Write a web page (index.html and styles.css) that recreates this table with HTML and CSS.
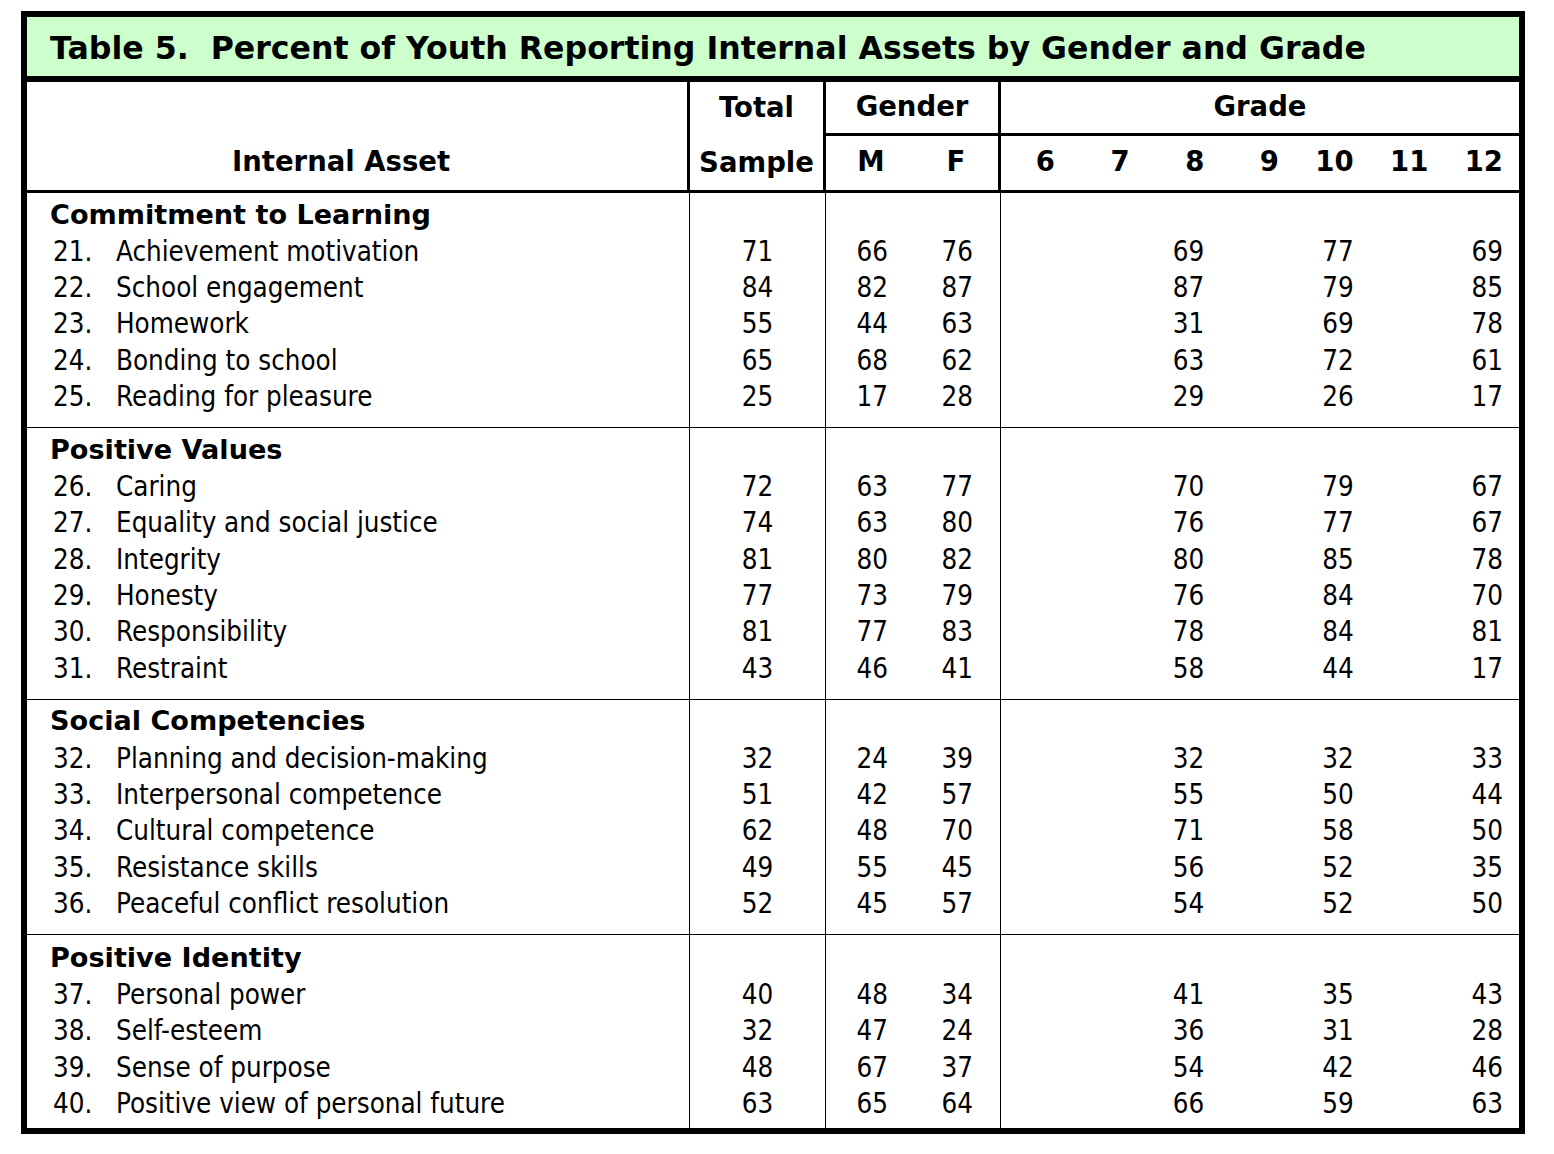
FILE: index.html
```html
<!DOCTYPE html>
<html>
<head>
<meta charset="utf-8">
<link rel="stylesheet" href="styles.css">
</head>
<body>
<div class="frame">
  <div class="title">Table 5.&nbsp; Percent of Youth Reporting Internal Assets by Gender and Grade</div>
  <div class="head">
    <div class="h-asset">Internal Asset</div>
    <div class="h-total"><span>Total</span><span>Sample</span></div>
    <div class="h-gender-top">Gender</div>
    <div class="h-grade-top">Grade</div>
    <div class="h-gender"><span class="lab c">M</span><span class="lab c">F</span></div>
    <div class="h-grade"><span>6</span><span>7</span><span>8</span><span>9</span><span>10</span><span>11</span><span>12</span></div>
  </div>

  <div class="section">
    <div class="c-asset">
      <div class="sec-title">Commitment to Learning</div>
      <div class="item"><span class="num">21.</span>Achievement motivation</div>
      <div class="item"><span class="num">22.</span>School engagement</div>
      <div class="item"><span class="num">23.</span>Homework</div>
      <div class="item"><span class="num">24.</span>Bonding to school</div>
      <div class="item"><span class="num">25.</span>Reading for pleasure</div>
    </div>
    <div class="c-total"><div class="blank"></div><div>71</div><div>84</div><div>55</div><div>65</div><div>25</div></div>
    <div class="c-gender"><div class="blank"></div>
      <span>66</span><span>76</span><span>82</span><span>87</span><span>44</span><span>63</span><span>68</span><span>62</span><span>17</span><span>28</span>
    </div>
    <div class="c-grade"><div class="blank"></div>
      <span></span><span></span><span>69</span><span></span><span>77</span><span></span><span>69</span>
      <span></span><span></span><span>87</span><span></span><span>79</span><span></span><span>85</span>
      <span></span><span></span><span>31</span><span></span><span>69</span><span></span><span>78</span>
      <span></span><span></span><span>63</span><span></span><span>72</span><span></span><span>61</span>
      <span></span><span></span><span>29</span><span></span><span>26</span><span></span><span>17</span>
    </div>
  </div>

  <div class="section">
    <div class="c-asset">
      <div class="sec-title">Positive Values</div>
      <div class="item"><span class="num">26.</span>Caring</div>
      <div class="item"><span class="num">27.</span>Equality and social justice</div>
      <div class="item"><span class="num">28.</span>Integrity</div>
      <div class="item"><span class="num">29.</span>Honesty</div>
      <div class="item"><span class="num">30.</span>Responsibility</div>
      <div class="item"><span class="num">31.</span>Restraint</div>
    </div>
    <div class="c-total"><div class="blank"></div><div>72</div><div>74</div><div>81</div><div>77</div><div>81</div><div>43</div></div>
    <div class="c-gender"><div class="blank"></div>
      <span>63</span><span>77</span><span>63</span><span>80</span><span>80</span><span>82</span><span>73</span><span>79</span><span>77</span><span>83</span><span>46</span><span>41</span>
    </div>
    <div class="c-grade"><div class="blank"></div>
      <span></span><span></span><span>70</span><span></span><span>79</span><span></span><span>67</span>
      <span></span><span></span><span>76</span><span></span><span>77</span><span></span><span>67</span>
      <span></span><span></span><span>80</span><span></span><span>85</span><span></span><span>78</span>
      <span></span><span></span><span>76</span><span></span><span>84</span><span></span><span>70</span>
      <span></span><span></span><span>78</span><span></span><span>84</span><span></span><span>81</span>
      <span></span><span></span><span>58</span><span></span><span>44</span><span></span><span>17</span>
    </div>
  </div>

  <div class="section">
    <div class="c-asset">
      <div class="sec-title">Social Competencies</div>
      <div class="item"><span class="num">32.</span>Planning and decision-making</div>
      <div class="item"><span class="num">33.</span>Interpersonal competence</div>
      <div class="item"><span class="num">34.</span>Cultural competence</div>
      <div class="item"><span class="num">35.</span>Resistance skills</div>
      <div class="item"><span class="num">36.</span>Peaceful conflict resolution</div>
    </div>
    <div class="c-total"><div class="blank"></div><div>32</div><div>51</div><div>62</div><div>49</div><div>52</div></div>
    <div class="c-gender"><div class="blank"></div>
      <span>24</span><span>39</span><span>42</span><span>57</span><span>48</span><span>70</span><span>55</span><span>45</span><span>45</span><span>57</span>
    </div>
    <div class="c-grade"><div class="blank"></div>
      <span></span><span></span><span>32</span><span></span><span>32</span><span></span><span>33</span>
      <span></span><span></span><span>55</span><span></span><span>50</span><span></span><span>44</span>
      <span></span><span></span><span>71</span><span></span><span>58</span><span></span><span>50</span>
      <span></span><span></span><span>56</span><span></span><span>52</span><span></span><span>35</span>
      <span></span><span></span><span>54</span><span></span><span>52</span><span></span><span>50</span>
    </div>
  </div>

  <div class="section last">
    <div class="c-asset">
      <div class="sec-title">Positive Identity</div>
      <div class="item"><span class="num">37.</span>Personal power</div>
      <div class="item"><span class="num">38.</span>Self-esteem</div>
      <div class="item"><span class="num">39.</span>Sense of purpose</div>
      <div class="item"><span class="num">40.</span>Positive view of personal future</div>
    </div>
    <div class="c-total"><div class="blank"></div><div>40</div><div>32</div><div>48</div><div>63</div></div>
    <div class="c-gender"><div class="blank"></div>
      <span>48</span><span>34</span><span>47</span><span>24</span><span>67</span><span>37</span><span>65</span><span>64</span>
    </div>
    <div class="c-grade"><div class="blank"></div>
      <span></span><span></span><span>41</span><span></span><span>35</span><span></span><span>43</span>
      <span></span><span></span><span>36</span><span></span><span>31</span><span></span><span>28</span>
      <span></span><span></span><span>54</span><span></span><span>42</span><span></span><span>46</span>
      <span></span><span></span><span>66</span><span></span><span>59</span><span></span><span>63</span>
    </div>
  </div>
</div>
</body>
</html>
```

FILE: styles.css
```css
* { box-sizing: border-box; }
html, body { background: #fff; }
body {
  margin: 11px 0 0 21px;
  color: #000;
}
.frame {
  width: 1504px;
  border: 6px solid #000;
}
.title {
  height: 65px;
  background: #ccffcc;
  border-bottom: 6px solid #000;
  padding-left: 23px;
  font-family: "DejaVu Sans", sans-serif;
  font-weight: 700;
  font-size: 31.6px;
  line-height: 63px;
  white-space: nowrap;
}
.head {
  display: grid;
  grid-template-columns: 663px 136px 175px 1fr;
  grid-template-rows: 54px 54px;
  border-bottom: 3px solid #000;
  font-family: "DejaVu Sans", sans-serif;
  font-weight: 700;
  font-size: 27.5px;
}
.h-asset {
  grid-row: 1 / span 2;
  border-right: 3px solid #000;
  display: flex;
  align-items: flex-end;
  justify-content: flex-start;
  padding-left: 205px;
  padding-bottom: 11px;
  line-height: 36px;
}
.h-total {
  grid-row: 1 / span 2;
  border-right: 3px solid #000;
  display: flex;
  flex-direction: column;
  align-items: center;
  line-height: 36px;
  padding-top: 7px;
}
.h-total span:last-child { margin-top: 19px; }
.h-gender-top, .h-grade-top {
  border-bottom: 3px solid #000;
  display: flex;
  align-items: center;
  justify-content: center;
  line-height: 36px;
  padding-bottom: 3px;
}
.h-gender-top { border-right: 3px solid #000; }
.h-gender {
  border-right: 3px solid #000;
  display: grid;
  grid-template-columns: 62px 85px;
  justify-items: end;
  align-items: center;
  line-height: 36px;
  padding-bottom: 5px;
}
.h-gender .lab { width: 34px; text-align: center; }
.h-grade {
  display: grid;
  grid-template-columns: 54px repeat(6, 74.67px);
  justify-items: end;
  align-items: center;
  line-height: 36px;
  padding-bottom: 5px;
}

.section {
  display: grid;
  grid-template-columns: 663px 136px 175px 1fr;
  border-bottom: 1px solid #000;
  font-family: "DejaVu Sans Condensed", "Liberation Sans Narrow", "Open Sans", sans-serif;
  font-stretch: condensed;
  font-size: 27.5px;
  line-height: 36.3px;
}
.section.last { border-bottom: 0; }
.section > div { padding: 3.5px 0 13px; }
.section.last > div { padding: 4.5px 0 7px; }
.c-asset, .c-total, .c-gender { border-right: 1px solid #000; }
.blank { height: 36.3px; grid-column: 1 / -1; }
.sec-title {
  padding-left: 23px;
  font-family: "DejaVu Sans", sans-serif;
  font-stretch: normal;
  font-weight: 700;
  font-size: 27.1px;
}
.item { padding-left: 26px; white-space: nowrap; }
.num { display: inline-block; width: 63px; }
.c-total { text-align: center; }
.c-gender {
  display: grid;
  grid-template-columns: 62px 85px;
  justify-items: end;
  align-content: start;
}
.c-grade {
  display: grid;
  grid-template-columns: 54px repeat(6, 74.67px);
  justify-items: end;
  align-content: start;
}
.c-gender span, .c-grade span { height: 36.3px; }
```
